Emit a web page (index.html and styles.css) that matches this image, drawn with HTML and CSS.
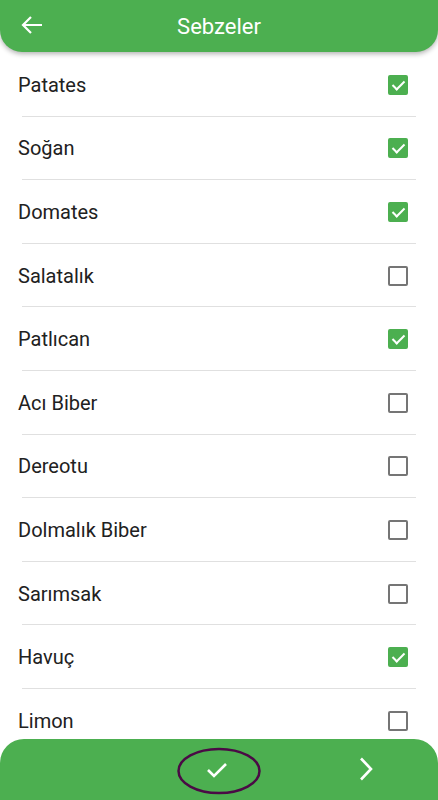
FILE: index.html
```html
<!DOCTYPE html>
<html lang="tr">
<head>
  <meta charset="UTF-8">
  <title>Sebzeler</title>
  <meta name="viewport" content="width=device-width, initial-scale=1.0">
  <link rel="stylesheet" href="styles.css">
</head>
<body>
  <header class="topbar">
    <button class="back" aria-label="Geri">
      <svg width="24" height="24" viewBox="0 0 24 24"><path d="M22 12H3M11 4l-8 8 8 8" fill="none" stroke="#fff" stroke-width="2.2"/></svg>
    </button>
    <h1>Sebzeler</h1>
  </header>

  <ul class="list">
    <li class="item"><span class="name">Patates</span><span class="box checked"></span></li>
    <li class="item"><span class="name">Soğan</span><span class="box checked"></span></li>
    <li class="item"><span class="name">Domates</span><span class="box checked"></span></li>
    <li class="item"><span class="name">Salatalık</span><span class="box"></span></li>
    <li class="item"><span class="name">Patlıcan</span><span class="box checked"></span></li>
    <li class="item"><span class="name">Acı Biber</span><span class="box"></span></li>
    <li class="item"><span class="name">Dereotu</span><span class="box"></span></li>
    <li class="item"><span class="name">Dolmalık Biber</span><span class="box"></span></li>
    <li class="item"><span class="name">Sarımsak</span><span class="box"></span></li>
    <li class="item"><span class="name">Havuç</span><span class="box checked"></span></li>
    <li class="item"><span class="name">Limon</span><span class="box"></span></li>
  </ul>

  <footer class="bottombar">
    <button class="confirm" aria-label="Tamam">
      <svg width="84" height="48" viewBox="0 0 84 48">
        <ellipse cx="42" cy="24" rx="40.5" ry="22" fill="none" stroke="#4a0a45" stroke-width="2.5"/>
        <path d="M31 23l6 6 12-12" fill="none" stroke="#fff" stroke-width="2.6"/>
      </svg>
    </button>
    <button class="next" aria-label="İleri">
      <svg width="24" height="24" viewBox="0 0 24 24"><path d="M8 1.5l10 10.5-10 10.5" fill="none" stroke="#fff" stroke-width="2.6"/></svg>
    </button>
  </footer>
</body>
</html>
```

FILE: styles.css
```css
html, body {
  margin: 0;
  padding: 0;
  height: 800px;
  overflow: hidden;
}
body {
  font-family: Roboto, "Noto Sans", sans-serif;
  background: #fff;
  color: #212121;
}
button {
  background: none;
  border: none;
  padding: 0;
  cursor: pointer;
}
.topbar {
  position: relative;
  z-index: 2;
  height: 52px;
  background: #4caf50;
  border-radius: 0 0 22px 22px;
  box-shadow: 0 2px 5px rgba(0,0,0,0.3);
  display: flex;
  align-items: center;
  justify-content: center;
}
.topbar h1 {
  margin: 0;
  font-size: 22px;
  font-weight: 400;
  color: #fff;
}
.back {
  position: absolute;
  left: 20px;
  top: 13px;
  width: 24px;
  height: 24px;
}
.list {
  list-style: none;
  margin: 1px 0 0;
  padding: 0;
}
.item {
  box-sizing: border-box;
  height: 63.6px;
  margin: 0 22px;
  padding-top: 1px;
  border-bottom: 1px solid #e0e0e0;
  display: flex;
  align-items: center;
  justify-content: space-between;
  font-size: 20px;
}
.name {
  margin-left: -4px;
}
.box {
  box-sizing: border-box;
  width: 20px;
  height: 20px;
  margin-right: 8px;
  border: 2px solid #757575;
  border-radius: 2px;
  position: relative;
}
.box.checked {
  background: #4caf50;
  border-color: #4caf50;
}
.box.checked::after {
  content: "";
  position: absolute;
  left: 5px;
  top: 1px;
  width: 5px;
  height: 10px;
  border: solid #fff;
  border-width: 0 2px 2px 0;
  transform: rotate(45deg);
}
.bottombar {
  position: fixed;
  left: 0;
  right: 0;
  bottom: 0;
  z-index: 2;
  height: 61px;
  background: #4caf50;
  border-radius: 24px 24px 0 0;
}
.confirm {
  position: absolute;
  left: 177px;
  top: 8px;
  width: 84px;
  height: 48px;
}
.next {
  position: absolute;
  left: 353px;
  top: 18px;
  width: 24px;
  height: 24px;
}
```
